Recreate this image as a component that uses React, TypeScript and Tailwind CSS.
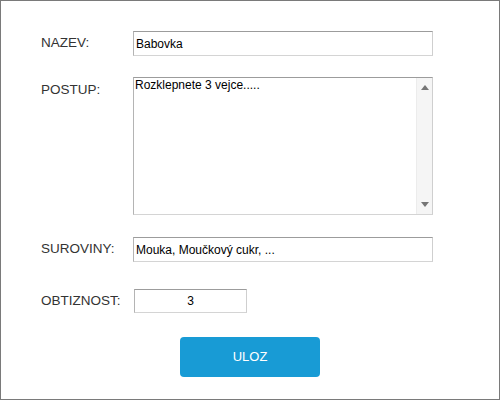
import React from "react"

const inputBorder =
  "border border-t-[#9c9c9c] border-l-[#b4b4b4] border-r-[#cfcfcf] border-b-[#d4d4d4]"

// Label cell for the form rows
function Label({ children, className = "" }: { children: React.ReactNode; className?: string }) {
  return <div className={`w-[92px] shrink-0 text-[13.5px] text-[#333] ${className}`}>{children}</div>
}

export default function App() {
  return (
    <div
      className="w-[500px] h-[400px] border border-[#7a7a7a] bg-white pl-[40px] pt-[30px] flex flex-col"
      style={{ fontFamily: '"Liberation Sans", Arial, sans-serif' }}
    >
      {/* Nazev */}
      <div className="flex items-center h-[25px]">
        <Label>NAZEV:</Label>
        <input
          defaultValue="Babovka"
          className={`w-[300px] h-[25px] px-[2px] text-[12px] text-black outline-none ${inputBorder}`}
        />
      </div>

      {/* Postup */}
      <div className="flex items-start mt-[21px]">
        <Label className="pt-[3px]">POSTUP:</Label>
        <div className={`flex w-[300px] h-[138px] ${inputBorder}`}>
          <textarea
            defaultValue="Rozklepnete 3 vejce....."
            className="flex-1 resize-none px-[1px] py-0 text-[12px] leading-[14px] text-black outline-none overflow-hidden"
          />
          <div className="w-[16px] bg-[#f5f5f5] border-l border-[#ececec] flex flex-col items-center justify-between py-[7px]">
            <div className="w-0 h-0 border-l-[4px] border-r-[4px] border-b-[5px] border-l-transparent border-r-transparent border-b-[#757575]" />
            <div className="w-0 h-0 border-l-[4px] border-r-[4px] border-t-[5px] border-l-transparent border-r-transparent border-t-[#757575]" />
          </div>
        </div>
      </div>

      {/* Suroviny */}
      <div className="flex items-center h-[25px] mt-[22px]">
        <Label>SUROVINY:</Label>
        <input
          defaultValue="Mouka, Moučkový cukr, ..."
          className={`w-[300px] h-[25px] px-[2px] text-[12px] text-black outline-none ${inputBorder}`}
        />
      </div>

      {/* Obtiznost */}
      <div className="flex items-center h-[24px] mt-[27px]">
        <Label>OBTIZNOST:</Label>
        <input
          defaultValue="3"
          className={`ml-[1px] w-[113px] h-[24px] text-center text-[12px] text-black outline-none ${inputBorder}`}
        />
      </div>

      <div className="mt-[24px] pl-[139px]">
        <button className="w-[140px] h-[40px] rounded-[4px] bg-[#189bd5] text-white text-[13px]">
          ULOZ
        </button>
      </div>
    </div>
  )
}
